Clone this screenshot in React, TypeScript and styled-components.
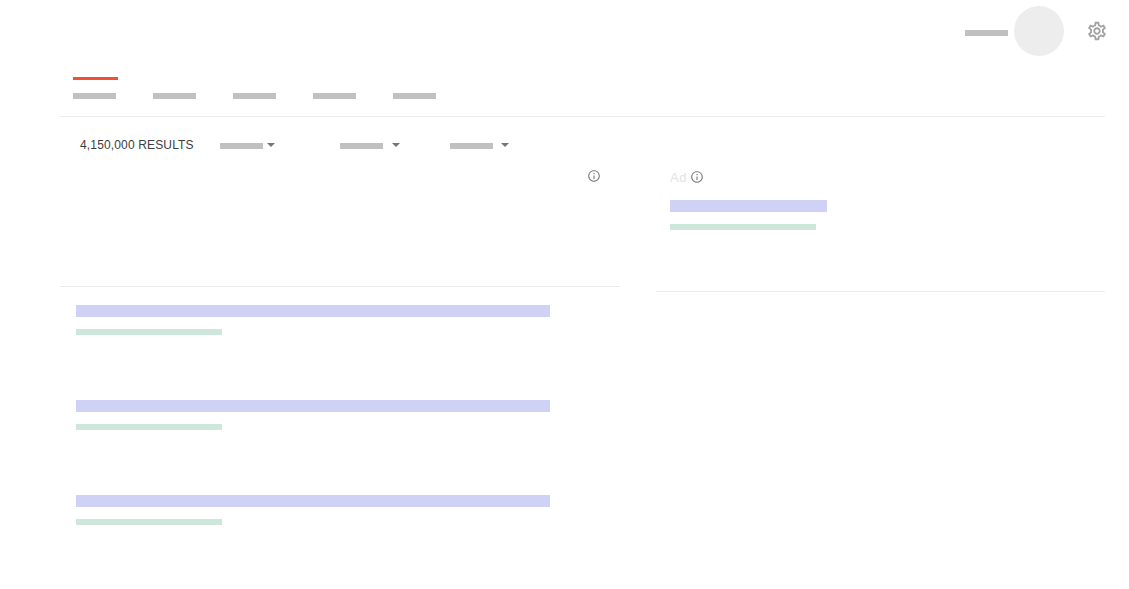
import styled, { createGlobalStyle } from "styled-components";
import { MdInfoOutline, MdOutlineSettings } from "react-icons/md";

const GlobalStyle = createGlobalStyle`
  html, body {
    margin: 0;
    padding: 0;
    background: #ffffff;
    font-family: "Liberation Sans", Arial, sans-serif;
  }
`;

const tabs = [0, 1, 2, 3, 4];
const filters = [
  { width: 120, gap: 4 },
  { width: 110, gap: 9 },
  { width: 60, gap: 8 },
];
const results = [0, 1, 2];

const App = () => {
  return (
    <Page>
      <GlobalStyle />
      <Header>
        <HeaderBar />
        <Avatar />
        <SettingsButton>
          <MdOutlineSettings size={22} />
        </SettingsButton>
      </Header>

      <Main>
        <Tabs>
          {tabs.map((t) => (
            <Tab key={t} $active={t === 0}>
              <GreyBar />
            </Tab>
          ))}
        </Tabs>

        <FilterRow>
          <ResultCount>4,150,000 RESULTS</ResultCount>
          {filters.map((f, i) => (
            <Filter key={i} $width={f.width} $gap={f.gap}>
              <GreyBar />
              <Caret />
            </Filter>
          ))}
        </FilterRow>

        <Columns>
          <LeftColumn>
            <InfoRow>
              <MdInfoOutline size={14} />
            </InfoRow>
            <LeftDivider />
            {results.map((r) => (
              <Result key={r}>
                <TitleBar $width={474} />
                <LinkBar $width={146} />
              </Result>
            ))}
          </LeftColumn>

          <RightColumn>
            <AdLabel>
              Ad
              <MdInfoOutline size={14} />
            </AdLabel>
            <TitleBar $width={157} />
            <LinkBar $width={146} />
          </RightColumn>
        </Columns>
      </Main>
    </Page>
  );
};

export default App;

const Page = styled.div`
  width: 1129px;
  height: 589px;
  overflow: hidden;
  box-sizing: border-box;
  padding-top: 6px;
`;

const Header = styled.header`
  height: 50px;
  display: flex;
  align-items: center;
  padding-right: 21px;
  justify-content: flex-end;
`;

const GreyBar = styled.div`
  flex: none;
  width: 43px;
  height: 6px;
  background-color: #c0c0c0;
`;

const HeaderBar = styled(GreyBar)`
  margin-top: 4px;
  margin-right: 6px;
`;

const Avatar = styled.div`
  width: 50px;
  height: 50px;
  border-radius: 50%;
  background-color: #ededed;
`;

const SettingsButton = styled.div`
  display: flex;
  margin-left: 22px;
  color: #a3a3a3;
`;

const Main = styled.main`
  width: 1045px;
  margin-left: 60px;
  margin-top: 21px;
`;

const Tabs = styled.nav`
  display: flex;
  gap: 35px;
  height: 39px;
  padding-left: 13px;
  border-bottom: 1px solid #ebebeb;
`;

const Tab = styled.div<{ $active?: boolean }>`
  width: 45px;
  height: 16px;
  padding-top: 13px;
  border-top: 3px solid ${(p) => (p.$active ? "#f0512f" : "transparent")};
`;

const FilterRow = styled.div`
  display: flex;
  align-items: center;
  height: 14px;
  margin-top: 21px;
  padding-left: 20px;
`;

const ResultCount = styled.span`
  width: 140px;
  font-size: 12px;
  line-height: 14px;
  letter-spacing: 0.15px;
  color: #3d3d3d;
  white-space: nowrap;
`;

const Filter = styled.div<{ $width: number; $gap: number }>`
  display: flex;
  align-items: center;
  gap: ${(p) => p.$gap}px;
  width: ${(p) => p.$width}px;
  padding-top: 2px;
`;

const Caret = styled.span`
  width: 0;
  height: 0;
  margin-bottom: 2px;
  border-left: 4px solid transparent;
  border-right: 4px solid transparent;
  border-top: 4px solid #757575;
`;

const Columns = styled.div`
  display: flex;
  margin-top: 15px;
`;

const LeftColumn = styled.section`
  width: 560px;
`;

const InfoRow = styled.div`
  display: flex;
  justify-content: flex-end;
  height: 15px;
  padding: 2px 19px 0 0;
  color: #808080;
`;

const LeftDivider = styled.hr`
  height: 1px;
  margin: 102px 0 18px;
  border: 0;
  background-color: #ebebeb;
`;

const Result = styled.article`
  height: 95px;
  padding-left: 16px;
`;

const TitleBar = styled.div<{ $width: number }>`
  width: ${(p) => p.$width}px;
  height: 12px;
  background-color: #cfd2f5;
`;

const LinkBar = styled.div<{ $width: number }>`
  width: ${(p) => p.$width}px;
  height: 6px;
  margin-top: 12px;
  background-color: #cde8db;
`;

const RightColumn = styled.aside`
  box-sizing: border-box;
  width: 449px;
  height: 125px;
  margin-left: 36px;
  padding: 4px 0 0 14px;
  border-bottom: 1px solid #ebebeb;
`;

const AdLabel = styled.div`
  display: flex;
  align-items: center;
  gap: 3px;
  height: 12px;
  margin-bottom: 17px;
  font-size: 13px;
  letter-spacing: 0.6px;
  color: #e3e3e3;

  svg {
    margin-bottom: 1px;
    color: #808080;
  }
`;
